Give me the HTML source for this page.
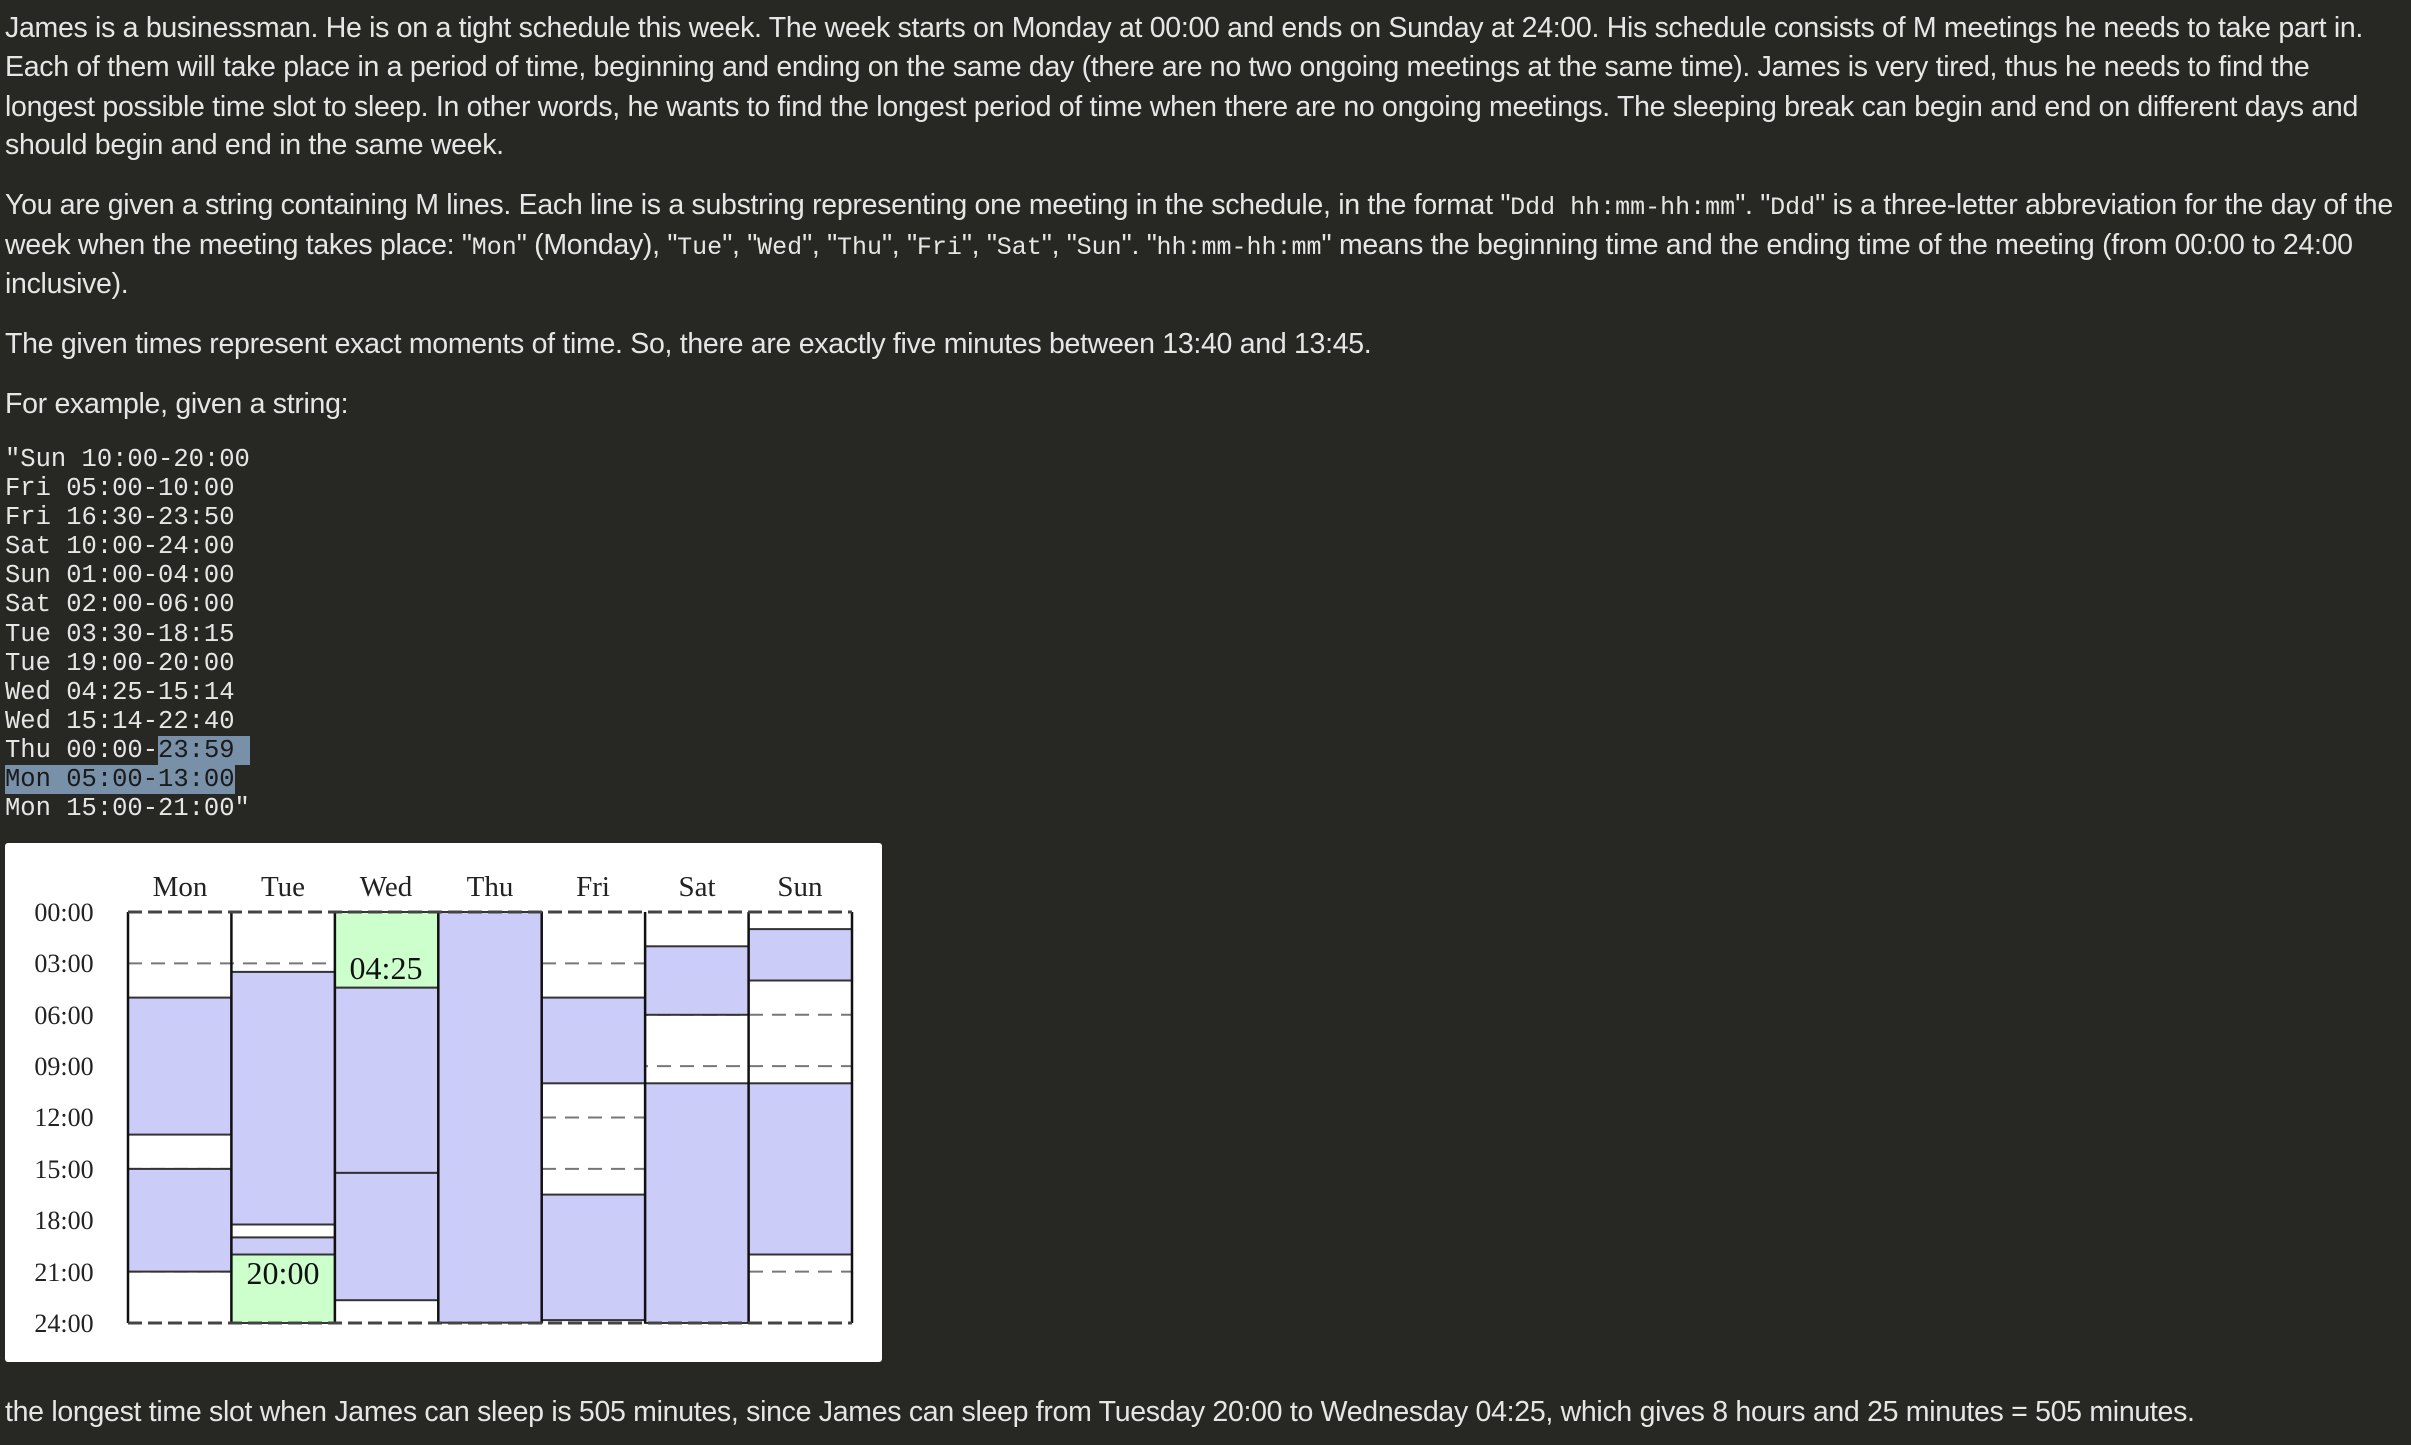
<!DOCTYPE html>
<html><head><meta charset="utf-8">
<style>
html,body{margin:0;padding:0;width:2411px;height:1445px;overflow:hidden;background:#272823;}
.t{position:absolute;left:5px;font-family:"Liberation Sans",sans-serif;font-size:28.5px;color:#e6e6e6;white-space:nowrap;line-height:39px;letter-spacing:-0.3px}
.m{font-family:"Liberation Mono",monospace;font-size:25px;letter-spacing:0}
pre{position:absolute;left:5px;top:445px;margin:0;font-family:"Liberation Mono",monospace;font-size:25.5px;line-height:29.1px;color:#e6e6e6}
.hl{background:#7890a8;color:#1a1a1a}
</style></head><body>
<div class="t" style="top:9px">James is a businessman. He is on a tight schedule this week. The week starts on Monday at 00:00 and ends on Sunday at 24:00. His schedule consists of M meetings he needs to take part in.</div>
<div class="t" style="top:48px">Each of them will take place in a period of time, beginning and ending on the same day (there are no two ongoing meetings at the same time). James is very tired, thus he needs to find the</div>
<div class="t" style="top:88px">longest possible time slot to sleep. In other words, he wants to find the longest period of time when there are no ongoing meetings. The sleeping break can begin and end on different days and</div>
<div class="t" style="top:126px">should begin and end in the same week.</div>
<div class="t" style="top:186px">You are given a string containing M lines. Each line is a substring representing one meeting in the schedule, in the format "<span class="m">Ddd hh:mm-hh:mm</span>". "<span class="m">Ddd</span>" is a three-letter abbreviation for the day of the</div>
<div class="t" style="top:226px">week when the meeting takes place: "<span class="m">Mon</span>" (Monday), "<span class="m">Tue</span>", "<span class="m">Wed</span>", "<span class="m">Thu</span>", "<span class="m">Fri</span>", "<span class="m">Sat</span>", "<span class="m">Sun</span>". "<span class="m">hh:mm-hh:mm</span>" means the beginning time and the ending time of the meeting (from 00:00 to 24:00</div>
<div class="t" style="top:265px">inclusive).</div>
<div class="t" style="top:325px">The given times represent exact moments of time. So, there are exactly five minutes between 13:40 and 13:45.</div>
<div class="t" style="top:385px">For example, given a string:</div>
<pre>"Sun 10:00-20:00
Fri 05:00-10:00
Fri 16:30-23:50
Sat 10:00-24:00
Sun 01:00-04:00
Sat 02:00-06:00
Tue 03:30-18:15
Tue 19:00-20:00
Wed 04:25-15:14
Wed 15:14-22:40
Thu 00:00-<span class="hl">23:59 </span>
<span class="hl">Mon 05:00-13:00</span>
Mon 15:00-21:00"</pre>
<svg style="position:absolute;left:0;top:0" width="2411" height="1445" viewBox="0 0 2411 1445">
<rect x="5" y="843" width="877" height="519" rx="3" fill="#fff"/>
<g font-family="Liberation Serif,serif" font-size="29" fill="#222" text-anchor="middle">
<text x="180" y="896">Mon</text><text x="283" y="896">Tue</text><text x="386" y="896">Wed</text><text x="490" y="896">Thu</text><text x="593" y="896">Fri</text><text x="697" y="896">Sat</text><text x="800" y="896">Sun</text>
</g>
<g font-family="Liberation Serif,serif" font-size="26" fill="#222" text-anchor="middle">
<text x="64" y="921">00:00</text><text x="64" y="972">03:00</text><text x="64" y="1024">06:00</text><text x="64" y="1075">09:00</text><text x="64" y="1126">12:00</text><text x="64" y="1178">15:00</text><text x="64" y="1229">18:00</text><text x="64" y="1281">21:00</text><text x="64" y="1332">24:00</text>
</g>
<g stroke="#777" stroke-width="2" stroke-dasharray="14,9">
<line x1="128" y1="963.4" x2="852" y2="963.4"/><line x1="128" y1="1014.8" x2="852" y2="1014.8"/><line x1="128" y1="1066.1" x2="852" y2="1066.1"/><line x1="128" y1="1117.5" x2="852" y2="1117.5"/><line x1="128" y1="1168.9" x2="852" y2="1168.9"/><line x1="128" y1="1220.3" x2="852" y2="1220.3"/><line x1="128" y1="1271.6" x2="852" y2="1271.6"/>
</g>
<g fill="#ccccf8" stroke="#333" stroke-width="2">
<rect x="128" y="997.6" width="103.4" height="137"/>
<rect x="128" y="1168.9" width="103.4" height="102.7"/>
<rect x="231.4" y="971.9" width="103.5" height="252.6"/>
<rect x="231.4" y="1237.4" width="103.5" height="17.1"/>
<rect x="334.9" y="987.6" width="103.4" height="185.3"/>
<rect x="334.9" y="1172.9" width="103.4" height="127.3"/>
<rect x="438.3" y="912" width="103.4" height="410.7"/>
<rect x="541.7" y="997.6" width="103.4" height="85.7"/>
<rect x="541.7" y="1194.6" width="103.4" height="125.5"/>
<rect x="645.1" y="946.3" width="103.5" height="68.5"/>
<rect x="645.1" y="1083.3" width="103.5" height="239.7"/>
<rect x="748.6" y="929.1" width="103.4" height="51.4"/>
<rect x="748.6" y="1083.3" width="103.4" height="171.2"/>
</g>
<g fill="#ccffcc" stroke="#333" stroke-width="2">
<rect x="231.4" y="1254.5" width="103.5" height="68.5"/>
<rect x="334.9" y="912" width="103.4" height="75.6"/>
</g>
<g font-family="Liberation Serif,serif" font-size="32" fill="#111" text-anchor="middle">
<text x="283" y="1284">20:00</text><text x="386" y="979">04:25</text>
</g>
<g stroke="#111" stroke-width="2.5">
<line x1="128" y1="912" x2="128" y2="1323"/><line x1="231.4" y1="912" x2="231.4" y2="1323"/><line x1="334.9" y1="912" x2="334.9" y2="1323"/><line x1="438.3" y1="912" x2="438.3" y2="1323"/><line x1="541.7" y1="912" x2="541.7" y2="1323"/><line x1="645.1" y1="912" x2="645.1" y2="1323"/><line x1="748.6" y1="912" x2="748.6" y2="1323"/><line x1="852" y1="912" x2="852" y2="1323"/>
</g>
<g stroke="#444" stroke-width="3" stroke-dasharray="14,6">
<line x1="128" y1="912" x2="852" y2="912"/><line x1="128" y1="1323" x2="852" y2="1323"/>
</g>
</svg>
<div class="t" style="top:1393px">the longest time slot when James can sleep is 505 minutes, since James can sleep from Tuesday 20:00 to Wednesday 04:25, which gives 8 hours and 25 minutes = 505 minutes.</div>
</body></html>
